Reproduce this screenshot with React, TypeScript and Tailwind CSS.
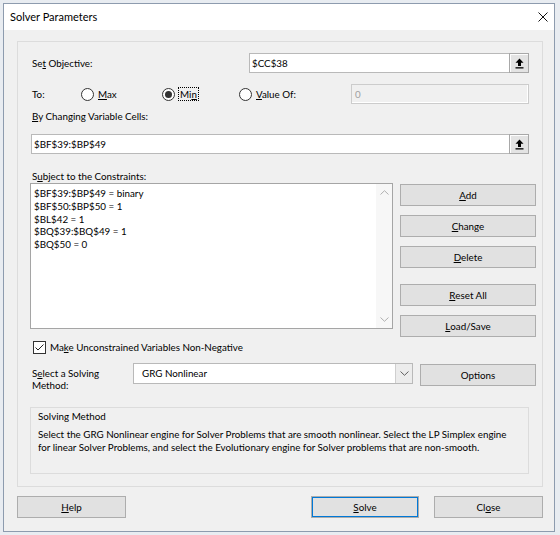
import React from 'react';

// Small helpers for Windows-style dialog bits
const RefButton = () => (
  <div className="w-[20px] h-[20px] -my-px -mr-px border border-[#a8a8a8] bg-[#e3e3e3] shadow-[inset_1px_1px_0_#fdfdfd] flex items-center justify-center">
    <svg width="9" height="11" viewBox="0 0 9 11">
      <path d="M4.5 0.5 L8.5 4.8 L6 4.8 L6 8 L3 8 L3 4.8 L0.5 4.8 Z" fill="#000" />
      <rect x="0.5" y="9.2" width="8" height="1.3" fill="#000" />
    </svg>
  </div>
);

const Radio = ({ checked }: { checked?: boolean }) => (
  <span className="w-[13px] h-[13px] rounded-full border border-[#333333] bg-white flex items-center justify-center shrink-0">
    {checked && <span className="w-[7px] h-[7px] rounded-full bg-[#333333]" />}
  </span>
);

const Btn = ({ children, className = '' }: { children: React.ReactNode; className?: string }) => (
  <div className={`h-[22px] bg-[#e1e1e1] border border-[#adadad] flex items-center justify-center text-black ${className}`}>
    {children}
  </div>
);

const Chevron = ({ up, color }: { up?: boolean; color: string }) => (
  <svg width="9" height="5" viewBox="0 0 9 5">
    <path d={up ? 'M0.5 4.5 L4.5 0.7 L8.5 4.5' : 'M0.5 0.5 L4.5 4.3 L8.5 0.5'} fill="none" stroke={color} strokeWidth="1" />
  </svg>
);

const constraints = [
  '$BF$39:$BP$49 = binary',
  '$BF$50:$BP$50 = 1',
  '$BL$42 = 1',
  '$BQ$39:$BQ$49 = 1',
  '$BQ$50 = 0',
];

export default function App() {
  return (
    <div className="w-[560px] h-[535px] bg-[#e8ecf1] pt-[3px] pl-[3px] font-['Lato',_'Liberation_Sans',_sans-serif] text-[9.8px] text-black">
      <div className="w-[552px] h-[529px] border border-[#8d9bae] bg-[#f0f0f0] flex flex-col">
        {/* title bar */}
        <div className="h-[26px] bg-white flex items-center justify-between pl-[6px] pr-[6px] shrink-0">
          <span className="text-[11px] pt-px">Solver Parameters</span>
          <svg width="10" height="10" viewBox="0 0 10 10">
            <path d="M0.5 0.5 L9.5 9.5 M9.5 0.5 L0.5 9.5" stroke="#111" strokeWidth="1" />
          </svg>
        </div>

        <div className="pl-[13px] pt-[11px]">
          {/* group frame */}
          <div className="w-[526px] h-[446px] border border-[#dcdcdc] flex flex-col">
            {/* Set Objective */}
            <div className="mt-[11px] h-[20px] flex items-center pl-[14px] pr-[13px]">
              <span>
                Se<u className="underline-offset-1">t</u> Objective:
              </span>
              <div className="ml-auto w-[280px] h-[20px] border border-[#b9b9b9] bg-white flex items-center">
                <span className="flex-1 pl-[2px]">$CC$38</span>
                <RefButton />
              </div>
            </div>

            {/* To: */}
            <div className="mt-[11px] h-[20px] flex items-center pl-[14px]">
              <span className="w-[49px]">To:</span>
              <div className="w-[81px] flex items-center gap-[4px]">
                <Radio />
                <span>
                  <u className="underline-offset-1">M</u>ax
                </span>
              </div>
              <div className="w-[77px] flex items-center gap-[3px]">
                <Radio checked />
                <span className="border border-dotted border-black px-px leading-[12px]">
                  Mi<u className="underline-offset-1">n</u>
                </span>
              </div>
              <div className="w-[112px] flex items-center gap-[4px]">
                <Radio />
                <span>
                  <u className="underline-offset-1">V</u>alue Of:
                </span>
              </div>
              <div className="w-[178px] h-[20px] border border-[#cccccc] bg-[#f0f0f0] shadow-[inset_-1px_-1px_0_#ffffff] flex items-center pl-[3px] text-[#a0a0a0]">
                0
              </div>
            </div>

            {/* By Changing */}
            <div className="mt-[5px] h-[14px] leading-[14px] pl-[14px]">
              <u className="underline-offset-1">B</u>y Changing Variable Cells:
            </div>
            <div className="mt-[11px] ml-[13px] w-[498px] h-[20px] border border-[#b9b9b9] bg-white flex items-center">
              <span className="flex-1 pl-[2px]">$BF$39:$BP$49</span>
              <RefButton />
            </div>

            {/* Subject to */}
            <div className="mt-[15px] h-[14px] leading-[14px] pl-[14px]">
              S<u className="underline-offset-1">u</u>bject to the Constraints:
            </div>
            <div className="flex items-start ml-[12px] gap-[7px]">
              <div className="w-[363px] h-[146px] border border-[#a5a5a5] bg-white flex">
                <div className="flex-1 pl-[3px] pt-[3px] leading-[12.8px]">
                  {constraints.map(c => (
                    <div key={c}>{c}</div>
                  ))}
                </div>
                <div className="w-[16px] bg-[#f7f7f7] flex flex-col items-center justify-between py-[6px]">
                  <Chevron up color="#b0b0b0" />
                  <Chevron color="#b0b0b0" />
                </div>
              </div>
              <div className="w-[136px] flex flex-col">
                <Btn className="mt-px">
                  <u className="underline-offset-1">A</u>dd
                </Btn>
                <Btn className="mt-[9px]">
                  <u className="underline-offset-1">C</u>hange
                </Btn>
                <Btn className="mt-[9px]">
                  <u className="underline-offset-1">D</u>elete
                </Btn>
                <Btn className="mt-[16px]">
                  <u className="underline-offset-1">R</u>eset All
                </Btn>
                <Btn className="mt-[9px]">
                  <u className="underline-offset-1">L</u>oad/Save
                </Btn>
              </div>
            </div>

            {/* Non-negative */}
            <div className="mt-[3px] h-[14px] flex items-center ml-[15px] gap-[4px]">
              <span className="w-[13px] h-[13px] border border-[#333333] bg-white flex items-center justify-center">
                <svg width="11" height="11" viewBox="0 0 11 11">
                  <path d="M1.5 5.5 L4 8 L9.5 2.5" fill="none" stroke="#222" strokeWidth="1" />
                </svg>
              </span>
              <span>
                Ma<u className="underline-offset-1">k</u>e Unconstrained Variables Non-Negative
              </span>
            </div>

            {/* solving method */}
            <div className="mt-[9px] h-[24px] flex items-start pl-[14px]">
              <div className="w-[101px] mt-[3.5px] leading-[12.5px]">
                S<u className="underline-offset-1">e</u>lect a Solving
                <br />
                Method:
              </div>
              <div className="w-[280px] h-[21px] border border-[#b9b9b9] bg-white flex items-center">
                <span className="flex-1 pl-[8px]">GRG Nonlinear</span>
                <div className="w-[17px] h-full border-l border-[#cfcfcf] bg-[#ececec] flex items-center justify-center">
                  <Chevron color="#606060" />
                </div>
              </div>
              <Btn className="ml-[7px] mt-px w-[116px]">Options</Btn>
            </div>

            {/* description */}
            <div className="mt-[20px] ml-[12px] w-[499px] h-[67px] border border-[#dcdcdc] pl-[7px] pt-[2px]">
              <div className="leading-[13px]">Solving Method</div>
              <div className="mt-[5px] leading-[13.3px]">
                Select the GRG Nonlinear engine for Solver Problems that are smooth nonlinear. Select the LP Simplex engine
                <br />
                for linear Solver Problems, and select the Evolutionary engine for Solver problems that are non-smooth.
              </div>
            </div>
          </div>

          {/* footer buttons */}
          <div className="mt-[9px] flex items-center">
            <Btn className="w-[109px]">
              <u className="underline-offset-1">H</u>elp
            </Btn>
            <Btn className="ml-[185px] w-[108px] border-[#0078d7] shadow-[inset_0_0_0_1px_#0078d7]">
              <u className="underline-offset-1">S</u>olve
            </Btn>
            <Btn className="ml-[15px] w-[109px]">
              Cl<u className="underline-offset-1">o</u>se
            </Btn>
          </div>
        </div>
      </div>
    </div>
  );
}
